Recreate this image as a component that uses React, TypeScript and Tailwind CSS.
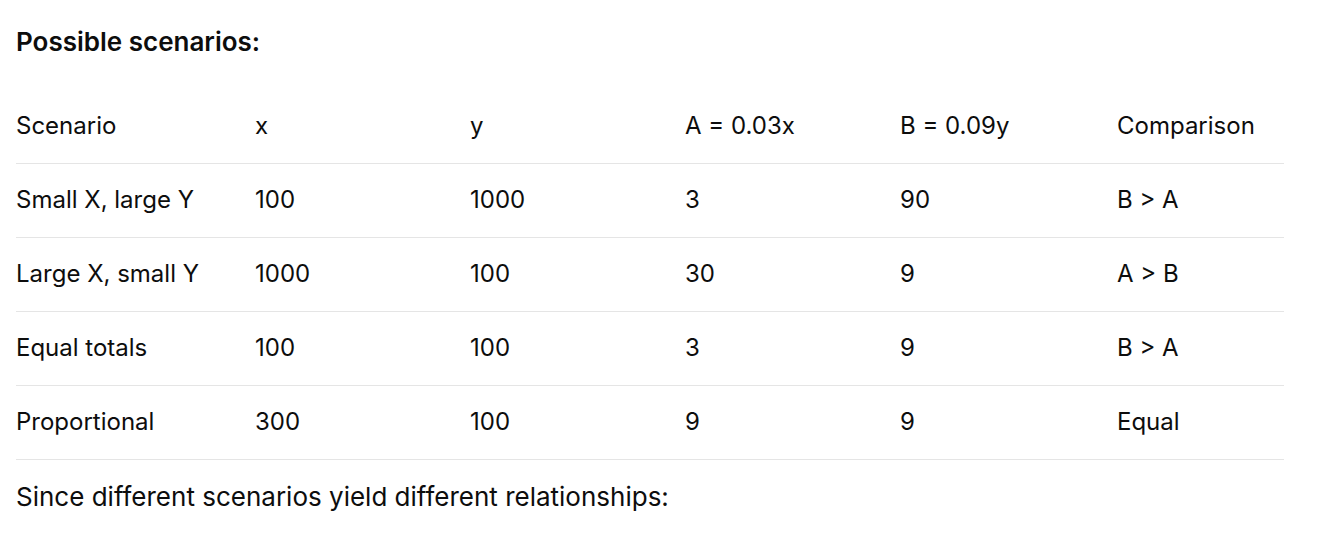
const rows = [
  ['Small X, large Y', '100', '1000', '3', '90', 'B > A'],
  ['Large X, small Y', '1000', '100', '30', '9', 'A > B'],
  ['Equal totals', '100', '100', '3', '9', 'B > A'],
  ['Proportional', '300', '100', '9', '9', 'Equal'],
];

const headers = ['Scenario', 'x', 'y', 'A = 0.03x', 'B = 0.09y', 'Comparison'];

export default function App() {
  return (
    <div
      className="w-[1336px] h-[546px] bg-white text-[#0d0d0d] pl-4 pr-[52px] pt-[26px]"
      style={{ fontFamily: 'Inter, "Noto Sans", sans-serif' }}
    >
      <p className="text-[26px] font-semibold leading-8">Possible scenarios:</p>
      <table className="mt-[31px] w-full border-collapse text-[24px]">
        <colgroup>
          <col className="w-[239px]" />
          <col className="w-[215px]" />
          <col className="w-[215px]" />
          <col className="w-[215px]" />
          <col className="w-[217px]" />
          <col />
        </colgroup>
        <thead>
          <tr className="h-[74px] border-b border-[#e5e5e5]">
            {headers.map((h) => (
              <th key={h} className="text-left font-normal p-0">
                {h}
              </th>
            ))}
          </tr>
        </thead>
        <tbody>
          {rows.map((r) => (
            <tr key={r[0]} className="h-[74px] border-b border-[#e5e5e5]">
              {r.map((c, i) => (
                <td key={i} className="p-0">
                  {c}
                </td>
              ))}
            </tr>
          ))}
        </tbody>
      </table>
      <p className="text-[26px] mt-[21px] leading-8">Since different scenarios yield different relationships:</p>
    </div>
  );
}
